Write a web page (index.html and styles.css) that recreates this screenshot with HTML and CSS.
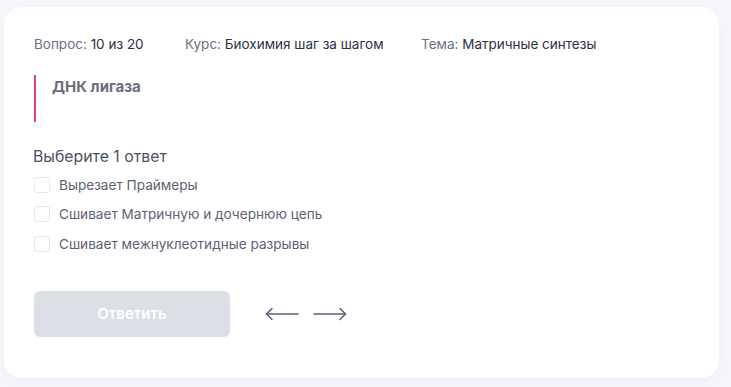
FILE: index.html
```html
<!DOCTYPE html>
<html lang="ru">
<head>
  <meta charset="UTF-8">
  <meta name="viewport" content="width=device-width, initial-scale=1.0">
  <title>Вопрос 10 из 20</title>
  <link rel="stylesheet" href="styles.css">
</head>

<body>
  <div class="card">
    <!-- мета-информация -->
    <div class="meta">
      <span class="meta-item">Вопрос: <b>10 из 20</b></span>
      <span class="meta-item">Курс: <b>Биохимия шаг за шагом</b></span>
      <span class="meta-item">Тема: <b>Матричные синтезы</b></span>
    </div>

    <!-- вопрос -->
    <div class="question">
      <div class="question-title">ДНК лигаза</div>
    </div>

    <!-- варианты ответа -->
    <div class="answers">
      <div class="answers-hint">Выберите 1 ответ</div>
      <label class="option"><span class="box"></span>Вырезает Праймеры</label>
      <label class="option"><span class="box"></span>Сшивает Матричную и дочернюю цепь</label>
      <label class="option"><span class="box"></span>Сшивает межнуклеотидные разрывы</label>
    </div>

    <!-- действия -->
    <div class="actions">
      <button class="submit" disabled>Ответить</button>
      <div class="nav">
        <svg width="34" height="14" viewBox="0 0 34 14" fill="none" stroke="currentColor" stroke-width="1.6" stroke-linecap="round" stroke-linejoin="round">
          <path d="M1.5 7H33"/><path d="M7 1.5L1.5 7L7 12.5"/>
        </svg>
        <svg width="34" height="14" viewBox="0 0 34 14" fill="none" stroke="currentColor" stroke-width="1.6" stroke-linecap="round" stroke-linejoin="round">
          <path d="M1 7H32.5"/><path d="M27 1.5L32.5 7L27 12.5"/>
        </svg>
      </div>
    </div>
  </div>
</body>
</html>
```

FILE: styles.css
```css
:root {
  --text: #2e3044;
  --muted: #6c6f82;
  --accent: #e0456d;
  --radius: 18px;
}

body {
  margin: 0;
  padding: 7px 12px 9px 4px;
  background: #f6f6fb;
  font-family: Inter, "Noto Sans", sans-serif;
  -webkit-font-smoothing: antialiased;
}

.card {
  height: 371px;
  box-sizing: border-box;
  padding: 27px 30px 0 30px;
  background: #ffffff;
  border-radius: var(--radius);
  box-shadow: 0 4px 14px rgba(120, 120, 200, 0.06);
}

.meta {
  display: flex;
  font-size: 13.5px;
  line-height: 20px;
  color: var(--muted);
}

.meta-item:nth-child(1) { width: 151px; }
.meta-item:nth-child(2) { width: 236px; }

.meta b {
  font-weight: 400;
  color: var(--text);
}

.question {
  margin-top: 21px;
  height: 47px;
  border-left: 2px solid var(--accent);
  padding-left: 16px;
  box-sizing: border-box;
}

.question-title {
  font-size: 15px;
  font-weight: 700;
  line-height: 22px;
  color: #6b6d7e;
  padding-top: 1px;
}

.answers {
  margin-top: 24px;
}

.answers-hint {
  font-size: 15.8px;
  line-height: 22px;
  color: #4d5063;
  margin-left: -1px;
  margin-bottom: 2px;
}

.option {
  display: flex;
  align-items: center;
  height: 29.5px;
  font-size: 13.6px;
  color: #5e6174;
}

.box {
  width: 14px;
  height: 14px;
  border: 1px solid #e5e7ee;
  border-radius: 3px;
  margin-right: 9px;
  flex-shrink: 0;
}

.actions {
  display: flex;
  align-items: center;
  margin-top: 32px;
}

.submit {
  width: 196px;
  height: 46px;
  border: none;
  border-radius: 6px;
  background: #dce0e6;
  color: #ffffff;
  font-family: inherit;
  font-size: 15px;
  font-weight: 600;
}

.nav {
  display: flex;
  gap: 14px;
  margin-left: 35px;
  color: #5f6378;
}
```
